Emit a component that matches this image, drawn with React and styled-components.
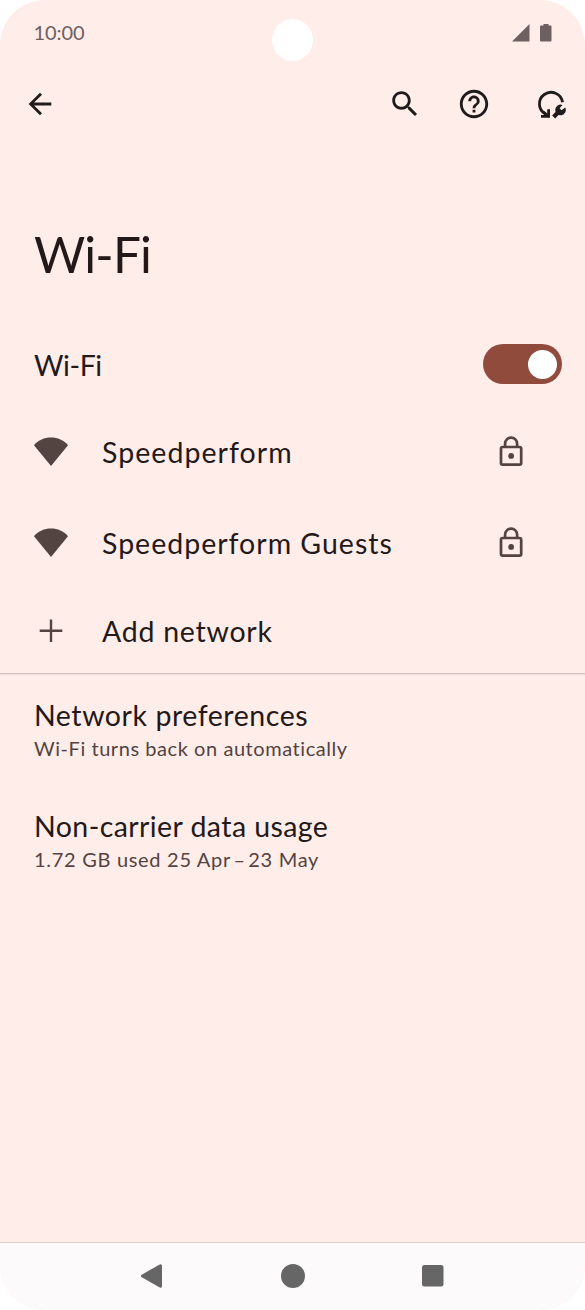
import React from "react";
import styled, { createGlobalStyle } from "styled-components";

const GlobalStyle = createGlobalStyle`
  * { box-sizing: border-box; }
  body { margin: 0; background: #fff; }
`;

const ink = "#231919";
const muted = "#534341";

const Screen = styled.div`
  position: relative;
  display: flex;
  flex-direction: column;
  width: 585px;
  height: 1310px;
  overflow: hidden;
  border-radius: 45px;
  background: #ffedea;
  color: ${ink};
  font-family: Lato, "Liberation Sans", sans-serif;
`;

const StatusBar = styled.header`
  display: flex;
  align-items: center;
  justify-content: space-between;
  height: 65px;
  padding: 0 33.5px 2px 33.5px;
`;

const Label = styled.span`
  display: block;
  white-space: nowrap;
  padding-top: ${(p) => p.$drop || 0}px;
  font-size: ${(p) => p.$size || 28.5}px;
  line-height: ${(p) => p.$line || 34}px;
  letter-spacing: ${(p) => p.$tracking || 0}px;
  color: ${(p) => p.$color || ink};
`;

const Dash = styled.span`
  margin: 0 2.5px;
`;

const StatusIcons = styled.div`
  display: flex;
  gap: 10px;
  padding-top: 2px;
`;

const Camera = styled.div`
  position: absolute;
  top: 19px;
  left: 272px;
  width: 41px;
  height: 42px;
  border-radius: 50%;
  background: #fff;
`;

const AppBar = styled.nav`
  display: flex;
  align-items: center;
  height: 78px;
  padding: 0 17.5px 0 23px;
`;

const IconButton = styled.button`
  display: flex;
  flex: none;
  margin: 0 0 0 ${(p) => p.$gap || 0}px;
  padding: 0;
  border: 0;
  background: none;
  color: #1f1b1a;
`;

const Actions = styled.div`
  display: flex;
  margin-left: auto;
`;

const Title = styled.h1`
  margin: 80px 0 0 34px;
  height: 99px;
  font-size: 49.5px;
  font-weight: 400;
  line-height: 63px;
  letter-spacing: -0.8px;
`;

const Row = styled.div`
  display: flex;
  align-items: center;
  height: ${(p) => p.$height}px;
  padding: 0 ${(p) => p.$right || 57}px 0 34px;
`;

const Lead = styled.div`
  display: flex;
  flex: none;
  justify-content: center;
  width: 34px;
  margin-right: 34px;
`;

const Trail = styled.div`
  display: flex;
  margin-left: auto;
`;

const Switch = styled.div`
  display: flex;
  justify-content: flex-end;
  align-items: center;
  width: 79.5px;
  height: 40px;
  margin-left: auto;
  padding-right: 5px;
  border-radius: 20px;
  background: #904b3d;
`;

const Thumb = styled.div`
  width: 29px;
  height: 29px;
  border-radius: 50%;
  background: #fff;
`;

const Divider = styled.div`
  height: 2px;
  flex: none;
  background: linear-gradient(#d3c0be 50%, #eedddb 50%);
`;

const Preference = styled.section`
  height: 111px;
  padding: 23px 34px 0;
`;

const NavBar = styled.footer`
  display: flex;
  align-items: center;
  justify-content: space-between;
  height: 68px;
  margin-top: auto;
  padding: 0 141px 1px 140px;
  border-top: 1px solid #decdcb;
  background: #fcfafb;
  color: #666;
`;

const Material = ({ d }) => (
  <svg width="34" height="34" viewBox="0 0 24 24" fill="currentColor">
    <path d={d} />
  </svg>
);

const ResetWrench = () => (
  <svg width="34" height="34" viewBox="0 0 34 34" fill="none" stroke="currentColor">
    <path d="M28.500 15.200A11.600 11.600 0 1 0 11.600 27.200" strokeWidth="2.800" />
    <path d="M7 29.400H14.600V22.200" strokeWidth="2.800" />
    <path d="M9.500 25L14 29" strokeWidth="2.800" />
    <path d="M19.600 30L25 24.600" strokeWidth="4.200" />
    <path
      d="M28.400 18L25.600 21.300L27.500 23.200L31.200 20.500A5.300 5.300 0 1 1 28.400 18Z"
      fill="currentColor"
      stroke="none"
    />
  </svg>
);

const WifiIcon = () => (
  <svg width="34" height="30" viewBox="0 0 34 30">
    <path d="M0 8.200C4.500 3.200 10.200.6 17 .6S29.500 3.200 34 8.200L17 29Z" fill={muted} />
  </svg>
);

const LockIcon = () => (
  <svg width="34" height="34" viewBox="0 0 34 34" fill="none" stroke={muted} strokeWidth="2.700">
    <rect x="7" y="12" width="20.200" height="17.700" rx="1.600" />
    <path d="M11.100 12V8.600A6 6 0 0 1 23.100 8.600V12" />
    <circle cx="17.100" cy="20.900" r="2.900" fill={muted} stroke="none" />
  </svg>
);

const Network = ({ name, tracking }) => (
  <Row $height={91}>
    <Lead><WifiIcon /></Lead>
    <Label $tracking={tracking}>{name}</Label>
    <Trail><LockIcon /></Trail>
  </Row>
);

export default function App() {
  return (
    <>
      <GlobalStyle />
      <Screen>
        <StatusBar>
          <Label $size={20} $tracking={-0.1} $color="#6d5f5f">10:00</Label>
          <StatusIcons>
            <svg width="18" height="18" viewBox="0 0 18 18"><path d="M0 17.500L17.500 0V17.500Z" fill="#6d6061" /></svg>
            <svg width="12" height="18" viewBox="0 0 12 18"><path d="M3.500 0H8.500V1.500H10.500Q11.500 1.500 11.500 2.500V16.500Q11.500 17.500 10.500 17.500H1Q0 17.500 0 16.500V2.500Q0 1.500 1 1.500H3.500Z" fill="#6d6061" /></svg>
          </StatusIcons>
        </StatusBar>
        <Camera />
        <AppBar>
          <IconButton aria-label="Back">
            <Material d="M20 11H7.830l5.590-5.590L12 4l-8 8 8 8 1.410-1.410L7.830 13H20v-2z" />
          </IconButton>
          <Actions>
            <IconButton aria-label="Search">
              <Material d="M15.500 14h-.790l-.280-.270C15.410 12.590 16 11.110 16 9.500 16 5.910 13.090 3 9.500 3S3 5.910 3 9.500 5.910 16 9.500 16c1.610 0 3.090-.590 4.230-1.570l.270.280v.790l5 4.990L20.490 19l-4.990-5zm-6 0C7.010 14 5 11.990 5 9.500S7.010 5 9.500 5 14 7.010 14 9.500 11.990 14 9.500 14z" />
            </IconButton>
            <IconButton aria-label="Help" $gap={34.5}>
              <Material d="M11 18h2v-2h-2v2zm1-16C6.480 2 2 6.480 2 12s4.480 10 10 10 10-4.480 10-10S17.520 2 12 2zm0 18c-4.410 0-8-3.590-8-8s3.590-8 8-8 8 3.590 8 8-3.590 8-8 8zm0-14c-2.210 0-4 1.790-4 4h2c0-1.100.900-2 2-2s2 .900 2 2c0 2-3 1.750-3 5h2c0-2.250 3-2.500 3-5 0-2.210-1.790-4-4-4z" />
            </IconButton>
            <IconButton aria-label="Reset" $gap={42.8}>
              <ResetWrench />
            </IconButton>
          </Actions>
        </AppBar>
        <Title>Wi-Fi</Title>
        <Row $height={84} $right={23}>
          <Label $tracking={-0.4} $drop={2}>Wi-Fi</Label>
          <Switch><Thumb /></Switch>
        </Row>
        <Network name="Speedperform" tracking={1.05} />
        <Network name="Speedperform Guests" tracking={1} />
        <Row $height={85}>
          <Lead>
            <svg width="24" height="24" viewBox="0 0 24 24" stroke={muted} strokeWidth="2.400"><path d="M.700 11.700H23.300M12 .400V23" /></svg>
          </Lead>
          <Label $tracking={0.75}>Add network</Label>
        </Row>
        <Divider />
        <Preference>
          <Label $tracking={0.55}>Network preferences</Label>
          <Label $size={20} $tracking={0.56} $line={32} $color={muted}>Wi-Fi turns back on automatically</Label>
        </Preference>
        <Preference>
          <Label $tracking={0.42}>Non-carrier data usage</Label>
          <Label $size={20} $tracking={0.7} $line={32} $color={muted}>1.72 GB used 25 Apr<Dash>–</Dash>23 May</Label>
        </Preference>
        <NavBar>
          <svg width="24" height="26" viewBox="0 0 24 26"><path d="M2.500 13L20.500 2.700V23.300Z" fill="currentColor" stroke="currentColor" strokeWidth="3" strokeLinejoin="round" /></svg>
          <svg width="24" height="24" viewBox="0 0 24 24"><circle cx="12" cy="12" r="12" fill="currentColor" /></svg>
          <svg width="22" height="22" viewBox="0 0 22 22"><rect width="21.500" height="21.500" rx="2.500" fill="currentColor" /></svg>
        </NavBar>
      </Screen>
    </>
  );
}
